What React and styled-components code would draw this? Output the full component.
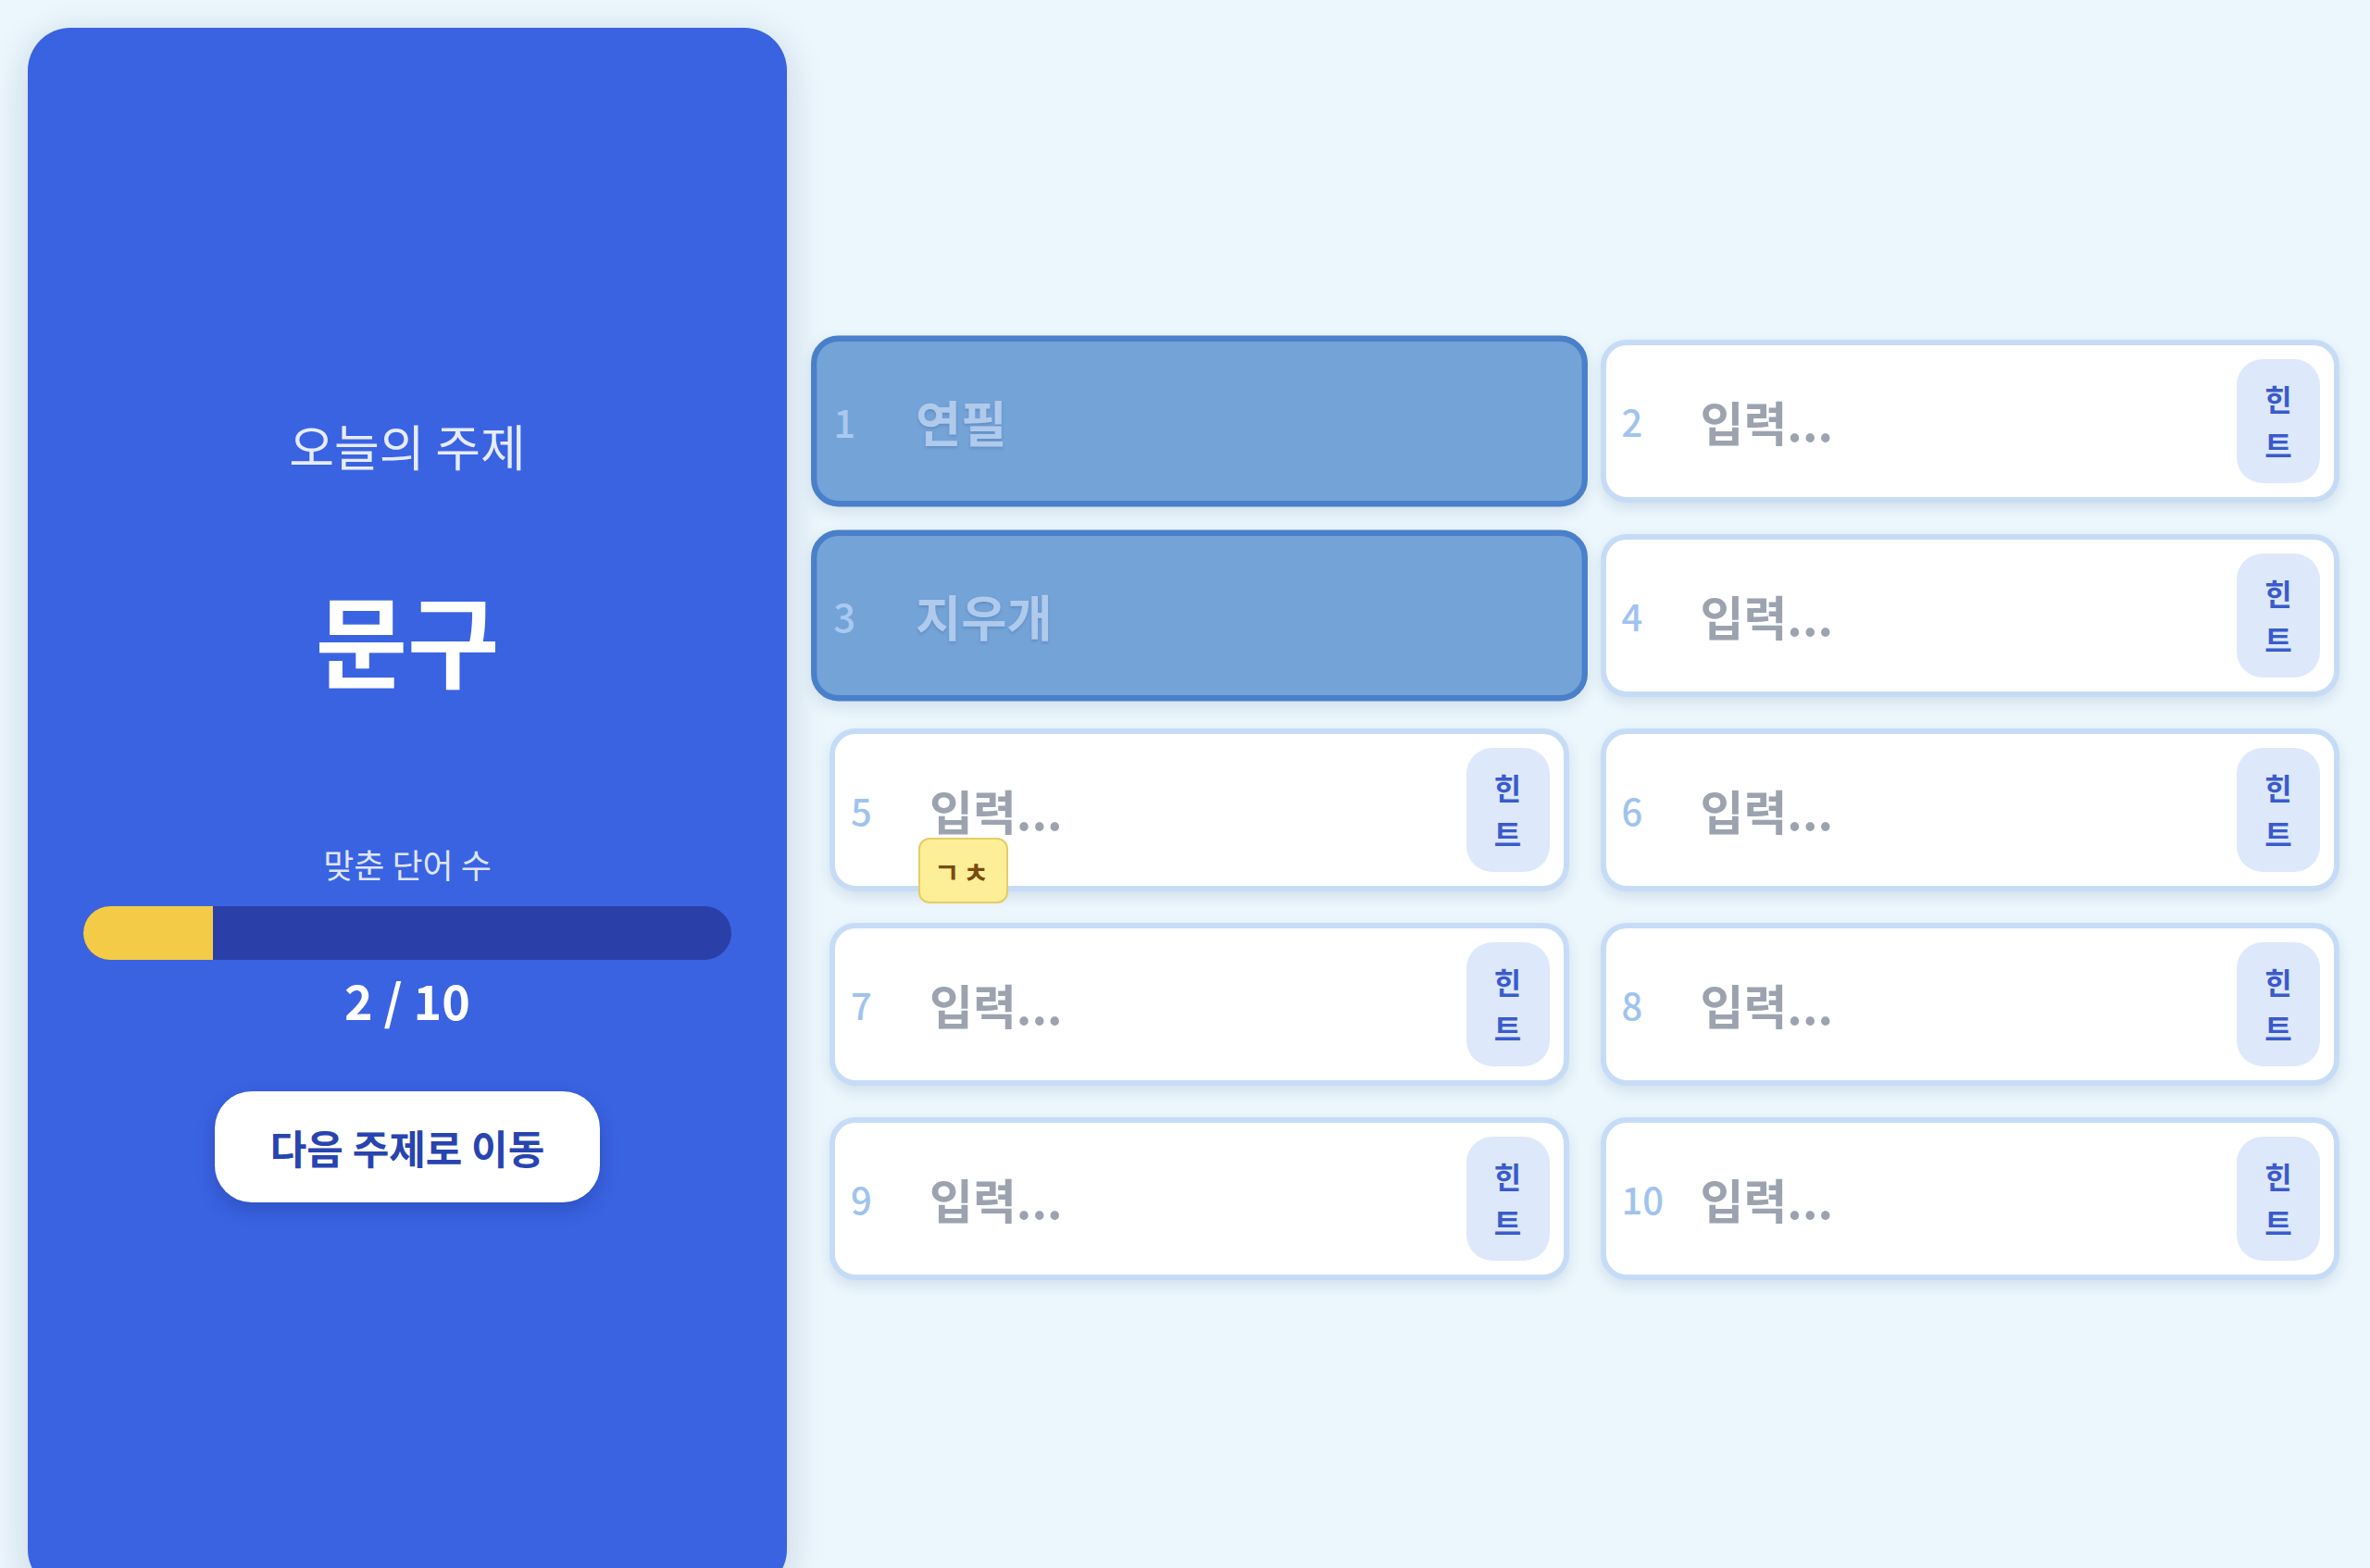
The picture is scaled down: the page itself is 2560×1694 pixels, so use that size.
import React from "react";
import styled, { createGlobalStyle } from "styled-components";

const GlobalStyle = createGlobalStyle`
  html, body {
    margin: 0;
    padding: 0;
    background: #ebf6fd;
    font-family: "Noto Sans CJK KR", "Noto Sans", sans-serif;
    overflow: hidden;
  }
`;

const words = [
  { id: 1, answer: "연필" },
  { id: 2 },
  { id: 3, answer: "지우개" },
  { id: 4 },
  { id: 5, hint: "ㄱㅊ" },
  { id: 6 },
  { id: 7 },
  { id: 8 },
  { id: 9 },
  { id: 10 },
];

function App() {
  const solved = words.filter((w) => w.answer).length;
  const percent = (solved / words.length) * 100;

  return (
    <>
      <GlobalStyle />
      <Page>
        <TopicPanel>
          <TopicLabel>오늘의 주제</TopicLabel>
          <TopicTitle>문구</TopicTitle>
          <ScoreLabel>맞춘 단어 수</ScoreLabel>
          <ProgressTrack>
            <ProgressFill style={{ width: `${percent}%` }} />
          </ProgressTrack>
          <ScoreText>
            {solved} / {words.length}
          </ScoreText>
          <NextButton>다음 주제로 이동</NextButton>
        </TopicPanel>

        <BoardArea>
          <WordGrid>
            {words.map((word) => (
              <WordCard key={word.id} $solved={!!word.answer}>
                <WordNumber $solved={!!word.answer}>{word.id}</WordNumber>
                <InputWrap>
                  {word.answer ? (
                    <WordInput $solved value={word.answer} readOnly />
                  ) : (
                    <WordInput placeholder="입력..." />
                  )}
                  {word.hint && <HintBubble>{word.hint}</HintBubble>}
                </InputWrap>
                {!word.answer && <HintButton>힌트</HintButton>}
              </WordCard>
            ))}
          </WordGrid>
        </BoardArea>
      </Page>
    </>
  );
}

const Page = styled.div`
  display: flex;
  gap: 46px;
  padding: 30px 33px 0 30px;
`;

const TopicPanel = styled.section`
  flex-shrink: 0;
  width: 820px;
  height: 1690px;
  border-radius: 46px;
  background: #3a63e2;
  box-shadow: 0 10px 44px rgba(20, 40, 70, 0.16);
  display: flex;
  flex-direction: column;
  align-items: center;
  justify-content: center;
`;

const TopicLabel = styled.div`
  font-size: 53px;
  font-weight: 400;
  line-height: 60px;
  color: #e6ecfc;
`;

const TopicTitle = styled.h1`
  margin: 117px 0 0;
  font-size: 108px;
  font-weight: 700;
  line-height: 120px;
  color: #ffffff;
`;

const ScoreLabel = styled.div`
  margin-top: 160px;
  font-size: 36px;
  line-height: 50px;
  color: #dfe6fa;
`;

const ProgressTrack = styled.div`
  margin-top: 21px;
  width: 700px;
  height: 58px;
  border-radius: 29px;
  background: #2a40a8;
  overflow: hidden;
`;

const ProgressFill = styled.div`
  height: 100%;
  background: #f3cb47;
`;

const ScoreText = styled.div`
  margin-top: 11px;
  font-size: 52px;
  font-weight: 600;
  line-height: 64px;
  color: #ffffff;
`;

const NextButton = styled.button`
  margin-top: 67px;
  height: 120px;
  padding: 0 60px;
  border: none;
  border-radius: 40px;
  background: #ffffff;
  color: #2744b0;
  font-family: inherit;
  font-size: 43px;
  font-weight: 700;
  box-shadow: 0 8px 20px rgba(10, 20, 80, 0.22);
`;

const BoardArea = styled.main`
  flex: 1;
  display: flex;
  align-items: center;
`;

const WordGrid = styled.div`
  width: 100%;
  display: grid;
  grid-template-columns: 1fr 1fr;
  grid-auto-rows: 176px;
  gap: 34px;
`;

const WordCard = styled.div`
  display: flex;
  align-items: center;
  box-sizing: border-box;
  padding: 0 15px 0 17px;
  border: 6px solid ${(p) => (p.$solved ? "#4a7fca" : "#c6dcf6")};
  border-radius: 28px;
  background: ${(p) => (p.$solved ? "#74a3d8" : "#ffffff")};
  box-shadow: 0 6px 14px rgba(40, 70, 110, 0.12);
  transform: ${(p) => (p.$solved ? "scale(1.05)" : "none")};
`;

const WordNumber = styled.span`
  flex-shrink: 0;
  width: 85px;
  font-size: 40px;
  font-weight: 500;
  color: ${(p) => (p.$solved ? "#a9c9f0" : "#9fc3ef")};
`;

const InputWrap = styled.div`
  position: relative;
  flex: 1;
  display: flex;
  align-items: center;
`;

const WordInput = styled.input`
  width: 100%;
  padding: 0;
  border: none;
  outline: none;
  background: transparent;
  font-family: inherit;
  font-size: 51px;
  font-weight: 700;
  line-height: 70px;
  color: ${(p) => (p.$solved ? "#b0caec" : "#4b5563")};
  text-shadow: ${(p) => (p.$solved ? "0 2px 3px rgba(40, 80, 140, 0.25)" : "none")};

  &::placeholder {
    color: #9ca3af;
  }
`;

const HintBubble = styled.div`
  position: absolute;
  left: -12px;
  top: calc(50% + 30px);
  width: 97px;
  height: 71px;
  box-sizing: border-box;
  display: flex;
  align-items: center;
  justify-content: center;
  border: 2px solid #e6cd62;
  border-radius: 12px;
  background: #fdee98;
  color: #7b4a10;
  font-size: 30px;
  font-weight: 700;
  letter-spacing: 4px;
  z-index: 2;
`;

const HintButton = styled.button`
  flex-shrink: 0;
  width: 90px;
  height: 134px;
  padding: 0 20px;
  border: none;
  border-radius: 28px;
  background: #dde8fb;
  color: #3a5bcc;
  font-family: inherit;
  font-size: 32px;
  font-weight: 700;
  line-height: 50px;
`;

export default App;
